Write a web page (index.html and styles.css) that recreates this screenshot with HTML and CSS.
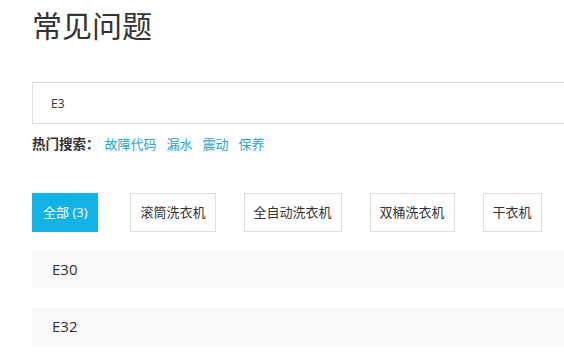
FILE: index.html
```html
<!DOCTYPE html>
<html lang="zh-CN">
<head>
    <meta charset="UTF-8">
    <meta name="viewport" content="width=device-width, initial-scale=1.0">
    <title>常见问题</title>
    <link rel="stylesheet" href="styles.css">
</head>
<body>
    <div class="faq">
        <h1 class="faq-title">常见问题</h1>
        <div class="search-box">
            <input class="search-input" type="text" value="E3">
        </div>
        <div class="hot">
            <span class="hot-label">热门搜索：</span>
            <a href="#">故障代码</a>
            <a href="#">漏水</a>
            <a href="#">震动</a>
            <a href="#">保养</a>
        </div>
        <div class="tabs">
            <a class="tab active" href="#">全部 (3)</a>
            <a class="tab" href="#">滚筒洗衣机</a>
            <a class="tab" href="#">全自动洗衣机</a>
            <a class="tab" href="#">双桶洗衣机</a>
            <a class="tab" href="#">干衣机</a>
        </div>
        <ul class="results">
            <li>E30</li>
            <li>E32</li>
        </ul>
    </div>
</body>
</html>
```

FILE: styles.css
```css
* {
    box-sizing: border-box;
}

html, body {
    margin: 0;
    overflow: hidden;
}

body {
    font-family: "Open Sans", "Noto Sans CJK SC", sans-serif;
    color: #333;
    background: #fff;
}

.faq {
    width: 700px;
    padding-left: 32px;
}

.faq-title {
    margin: 0;
    padding-top: 6px;
    font-size: 30px;
    line-height: 40px;
    font-weight: 400;
    color: #333;
}

.search-box {
    margin-top: 36px;
}

.search-input {
    display: block;
    width: 100%;
    height: 42px;
    border: 1px solid #ddd;
    padding: 0 0 0 18px;
    font-family: "Open Sans", sans-serif;
    font-size: 12px;
    color: #333;
    outline: none;
}

.hot {
    display: flex;
    align-items: center;
    gap: 10px;
    margin-top: 10px;
    font-size: 13px;
    line-height: 20px;
}

.hot-label {
    font-weight: 700;
    font-size: 13.5px;
    color: #333;
    margin-right: -5px;
}

.hot a {
    color: #2aa4cc;
    text-decoration: none;
}

.tabs {
    display: flex;
    gap: 28px;
    margin-top: 39px;
}

.tab {
    display: block;
    height: 39px;
    line-height: 37px;
    padding: 0 9px;
    border: 1px solid #ddd;
    font-size: 13px;
    color: #333;
    text-decoration: none;
}

.tab.active {
    padding: 0 10px;
    background: #12b3e4;
    border-color: #12b3e4;
    color: #fff;
    margin-right: 4px;
}

.results {
    list-style: none;
    margin: 19px 0 0;
    padding: 0;
}

.results li {
    height: 37px;
    line-height: 37px;
    padding-left: 20px;
    margin-bottom: 20px;
    background: #f9f9f9;
    font-size: 15px;
    color: #333;
}
```
